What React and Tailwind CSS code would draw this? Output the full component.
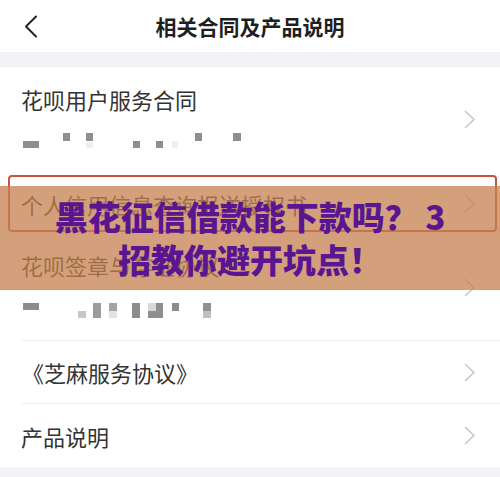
import React from "react";

const ChevronRight = () => (
  <svg width="12" height="19" viewBox="0 0 12 19" fill="none">
    <polyline points="1.5,1.5 10,9.5 1.5,17.5" stroke="#c6c6c6" strokeWidth="1.6" strokeLinejoin="round" strokeLinecap="round" />
  </svg>
);

const BackIcon = () => (
  <svg width="14" height="23" viewBox="0 0 14 23" fill="none">
    <polyline points="12,1.5 2,11.5 12,21.5" stroke="#222" strokeWidth="2" strokeLinejoin="round" strokeLinecap="round" />
  </svg>
);

// masked account info under the first contract
const MaskA = () => (
  <svg width="230" height="16" viewBox="0 0 230 16">
    <rect x="2" y="8" width="16" height="7" fill="#8f8f8f" />
    <rect x="42" y="0" width="7" height="8" fill="#8f8f8f" />
    <rect x="65" y="0" width="7" height="8" fill="#8f8f8f" />
    <rect x="65" y="9" width="7" height="6" fill="#eeeeee" />
    <rect x="112" y="8" width="7" height="7" fill="#8f8f8f" />
    <rect x="135" y="8" width="7" height="7" fill="#8f8f8f" />
    <rect x="151" y="8" width="6" height="7" fill="#efefef" />
    <rect x="174" y="0" width="7" height="8" fill="#8f8f8f" />
    <rect x="212" y="0" width="8" height="8" fill="#8f8f8f" />
  </svg>
);

const MaskB = () => (
  <svg width="230" height="16" viewBox="0 0 230 16">
    <rect x="2" y="0" width="16" height="7" fill="#8c8c8c" />
    <rect x="57" y="8" width="8" height="7" fill="#c8c8c8" />
    <rect x="72" y="0" width="8" height="15" fill="#9c9c9c" />
    <rect x="88" y="0" width="8" height="8" fill="#a4a4a4" />
    <rect x="88" y="8" width="8" height="7" fill="#e4e4e4" />
    <rect x="111" y="0" width="8" height="15" fill="#8c8c8c" />
    <rect x="127" y="0" width="15" height="15" fill="#8e8e8e" />
    <rect x="127" y="0" width="8" height="8" fill="#d8d8d8" />
    <rect x="151" y="0" width="7" height="8" fill="#8c8c8c" />
    <rect x="182" y="0" width="8" height="8" fill="#909090" />
    <rect x="182" y="8" width="8" height="7" fill="#c0c0c0" />
  </svg>
);

export default function App() {
  return (
    <div
      className="relative w-[500px] h-[477px] overflow-hidden bg-[#f4f2f6]"
      style={{ fontFamily: '"Noto Sans CJK SC", "Noto Sans", sans-serif' }}
    >
      {/* top bar */}
      <header className="h-[52px] bg-white grid grid-cols-[80px_1fr_80px] items-center">
        <div className="pl-[24px] flex items-center">
          <BackIcon />
        </div>
        <h1 className="text-center text-[21px] font-bold text-[#1f1f1f] leading-none">相关合同及产品说明</h1>
        <div />
      </header>

      <div className="h-[15px]" />

      <ul className="bg-white text-[#333] text-[22px] leading-[26px]">
        <li className="h-[105px] pl-[21px] pr-[24px] flex items-center justify-between">
          <div className="flex flex-col gap-[21px] pb-[4px]">
            <span>花呗用户服务合同</span>
            <MaskA />
          </div>
          <ChevronRight />
        </li>

        <li className="h-[63px] pl-[8px] pr-[3px] py-[3px]">
          <div className="h-full border-2 border-[#c6553a] rounded-[4px] pl-[11px] pr-[19px] flex items-center justify-between">
            <span>个人信用信息查询报送授权书</span>
            <ChevronRight />
          </div>
        </li>

        <li className="h-[105px] pl-[21px] pr-[24px] flex items-center justify-between">
          <div className="flex flex-col gap-[25px] pb-[4px]">
            <span>花呗签章与存证协议</span>
            <MaskB />
          </div>
          <ChevronRight />
        </li>

        <li className="ml-[22px] border-t border-[#eeeeee] h-[63px] pr-[24px] flex items-center justify-between">
          <span>《芝麻服务协议》</span>
          <ChevronRight />
        </li>

        <li className="ml-[22px] border-t border-[#eeeeee] h-[64px] pr-[24px] flex items-center justify-between">
          <span className="-ml-[1px]">产品说明</span>
          <ChevronRight />
        </li>
      </ul>

      {/* headline banner laid over the list */}
      <div className="absolute left-0 right-0 top-[186px] h-[104px] bg-[#c4804f]/75 flex flex-col items-center justify-center text-[33px] leading-[43px] font-black text-[#5a1690]">
        <span>黑花征信借款能下款吗？ 3</span>
        <span>招教你避开坑点！</span>
      </div>
    </div>
  );
}
